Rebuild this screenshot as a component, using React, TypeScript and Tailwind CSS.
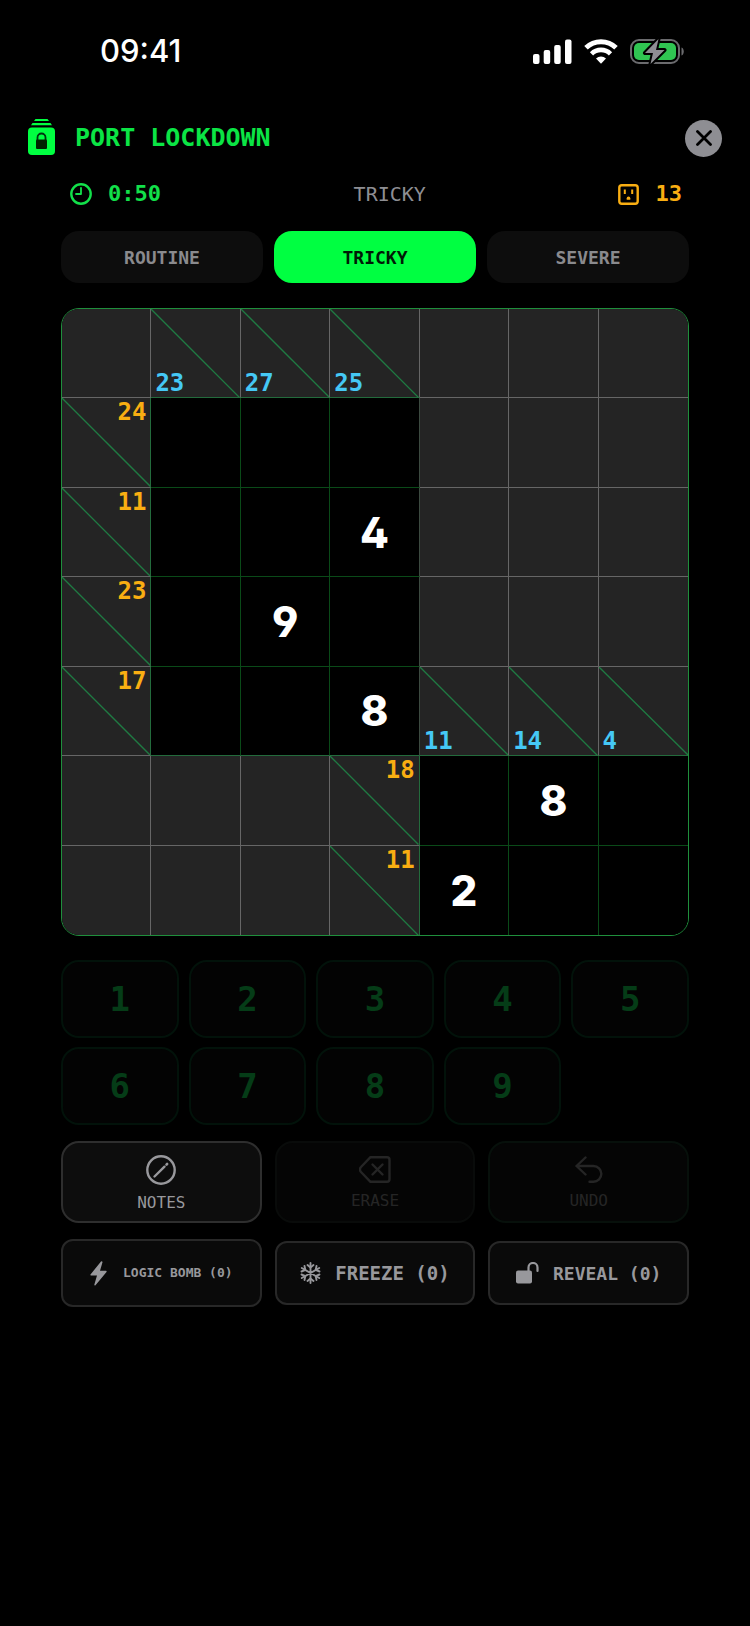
import React, { useState } from 'react';
import clsx from 'clsx';

type Cell =
  | { kind: 'block' }
  | { kind: 'clue'; down?: number; across?: number }
  | { kind: 'entry'; value?: number };

const B: Cell = { kind: 'block' };
const E: Cell = { kind: 'entry' };
const down = (n: number): Cell => ({ kind: 'clue', down: n });
const across = (n: number): Cell => ({ kind: 'clue', across: n });
const given = (n: number): Cell => ({ kind: 'entry', value: n });

const BOARD: Cell[][] = [
  [B, down(23), down(27), down(25), B, B, B],
  [across(24), E, E, E, B, B, B],
  [across(11), E, E, given(4), B, B, B],
  [across(23), E, given(9), E, B, B, B],
  [across(17), E, E, given(8), down(11), down(14), down(4)],
  [B, B, B, across(18), E, given(8), E],
  [B, B, B, across(11), given(2), E, E],
];

const LEVELS = ['ROUTINE', 'TRICKY', 'SEVERE'];

// Line colour depends on what sits on either side of it
const isEntry = (row: number, col: number) => BOARD[row]?.[col]?.kind === 'entry';

const rightBorder = (row: number, col: number) => {
  if (col === 6) return '';
  const a = isEntry(row, col);
  const b = isEntry(row, col + 1);
  if (a && b) return 'border-r border-r-[#0a4a18]';
  if (b) return 'border-r border-r-[#236b3c]';
  if (a) return 'border-r border-r-[#3c4a40]';
  return 'border-r border-r-[#666666]';
};

const bottomBorder = (row: number, col: number) => {
  if (row === 6) return '';
  const a = isEntry(row, col);
  const b = isEntry(row + 1, col);
  if (a && b) return 'border-b border-b-[#0a4a18]';
  if (a || b) return 'border-b border-b-[#236b3c]';
  return 'border-b border-b-[#666666]';
};

const StatusBar: React.FC = () => (
  <div className="flex items-center justify-between pl-[100px] pr-[66px] pt-[31px]">
    <span className="font-['Inter'] text-[31px] leading-10 font-medium text-white">09:41</span>
    <div className="flex items-center gap-3">
      <svg width="39" height="25" viewBox="0 0 39 25" fill="#fff">
        <rect x="0" y="15" width="6.500" height="10" rx="2" />
        <rect x="10.700" y="11" width="6.500" height="14" rx="2" />
        <rect x="21.200" y="6" width="6.500" height="19" rx="2" />
        <rect x="32" y="0.500" width="6.500" height="24.500" rx="2" />
      </svg>
      <svg width="34" height="25" viewBox="0 0 34 25" fill="none">
        <path d="M2 8.800a21.500 21.500 0 0 1 30 0" stroke="#fff" strokeWidth="5" />
        <path d="M7.500 14.800a13.500 13.500 0 0 1 19 0" stroke="#fff" strokeWidth="4.600" />
        <path d="M17 24.800l-5-5.300a7.400 7.400 0 0 1 10 0z" fill="#fff" />
      </svg>
      <svg width="54" height="27" viewBox="0 0 54 27">
        <rect x="1" y="2" width="48" height="23" rx="8" fill="none" stroke="#6b6b6e" strokeWidth="2" />
        <rect x="4" y="5" width="42" height="17" rx="5" fill="#30c552" />
        <path d="M51.500 9.500c3 .8 3 7.200 0 8z" fill="#6b6b6e" />
        <path d="M28.500 1L15 15h8l-2.500 11L34.500 12h-8.500z" fill="#8e8e93" stroke="#000" strokeWidth="4" strokeLinejoin="round" paintOrder="stroke" />
      </svg>
    </div>
  </div>
);

const Header: React.FC = () => (
  <header className="flex items-center justify-between px-7 pt-12">
    <div className="flex items-center gap-5">
      <svg width="27" height="38" viewBox="0 0 27 38">
        <path d="M7.500 0h12l1.500 2h-15zM4.500 4h18l1.500 2.300h-21z" fill="#00ff41" />
        <rect x="0" y="8.500" width="27" height="27.500" rx="4" fill="#00ff41" />
        <path d="M9.500 21v-2.500a4 4 0 0 1 8 0v2.500" fill="none" stroke="#031" strokeWidth="1.800" />
        <rect x="8" y="20.500" width="11" height="9.500" rx="1" fill="#020" />
      </svg>
      <h1 className="text-[25px] leading-9 font-bold text-[#0be545]">PORT LOCKDOWN</h1>
    </div>
    <button aria-label="Close" className="flex h-[37px] w-[37px] items-center justify-center rounded-full bg-[#8e8e93]">
      <svg width="16" height="16" viewBox="0 0 16 16" stroke="#000" strokeWidth="2.800" strokeLinecap="round">
        <path d="M1.500 1.500l13 13M14.500 1.500l-13 13" />
      </svg>
    </button>
  </header>
);

const Stats: React.FC = () => (
  <div className="flex items-center justify-between pl-[9px] pr-[7px] leading-7">
    <div className="flex items-center gap-4 text-[22px] font-bold text-[#12e04a]">
      <svg width="22" height="22" viewBox="0 0 22 22" fill="none" stroke="currentColor" strokeWidth="2.400">
        <circle cx="11" cy="11" r="9.700" />
        <path d="M11 4.800V11H6" strokeLinecap="round" strokeLinejoin="round" strokeWidth="1.800" />
      </svg>
      0:50
    </div>
    <div className="text-[20px] text-[#8e8e93]">TRICKY</div>
    <div className="flex items-center gap-4 text-[22px] font-bold text-[#f9ae12]">
      <svg width="21" height="21" viewBox="0 0 21 21" fill="currentColor">
        <rect x="1.300" y="1.300" width="18.400" height="18.400" rx="2.500" fill="none" stroke="currentColor" strokeWidth="2.400" />
        <rect x="5.800" y="5.500" width="2" height="4.500" />
        <rect x="13.200" y="5.500" width="2" height="4.500" />
        <path d="M8.700 15.800v-1.600a1.800 1.800 0 0 1 3.600 0v1.600z" />
      </svg>
      13
    </div>
  </div>
);

const BoardCell: React.FC<{ cell: Cell; row: number; col: number }> = ({ cell, row, col }) => {
  const borders = clsx(rightBorder(row, col), bottomBorder(row, col));

  if (cell.kind === 'entry') {
    return (
      <button
        aria-label={`Row ${row + 1}, column ${col + 1}`}
        className={clsx(
          "flex items-center justify-center bg-black font-['Inter'] text-[42px] font-extrabold text-white [font-feature-settings:'cv02','cv04']",
          borders
        )}
      >
        {cell.value}
      </button>
    );
  }

  if (cell.kind === 'block') {
    return <div className={clsx('bg-[#242424]', borders)} />;
  }

  return (
    <div className={clsx('relative flex bg-[#242424] px-1 text-[24px] leading-7 font-bold', borders)}>
      <svg className="absolute inset-0 h-full w-full" viewBox="0 0 100 100" preserveAspectRatio="none">
        <path d="M0 0L100 100" stroke="#1f7a42" strokeWidth="1.500" />
      </svg>
      {cell.across && <span className="ml-auto text-[#f9ae12]">{cell.across}</span>}
      {cell.down && <span className="mt-auto text-[#45c8f5]">{cell.down}</span>}
    </div>
  );
};

const App: React.FC = () => {
  const [level, setLevel] = useState('TRICKY');

  return (
    <div className="min-h-screen bg-black font-['DejaVu_Sans_Mono',monospace]">
      <StatusBar />
      <Header />

      <main className="px-[61px] pt-[23px]">
        <Stats />

        {/* Difficulty */}
        <div className="grid grid-cols-3 gap-[11px] pt-[23px]">
          {LEVELS.map((name) => (
            <button
              key={name}
              onClick={() => setLevel(name)}
              className={clsx(
                'h-[52px] rounded-[18px] text-[18px] font-bold',
                name === level ? 'bg-[#00ff41] text-[#001a06]' : 'bg-[#0d0d0d] text-[#8a8a8d]'
              )}
            >
              {name}
            </button>
          ))}
        </div>

        {/* Board */}
        <div className="mt-[25px] grid aspect-square grid-cols-7 grid-rows-7 overflow-hidden rounded-[18px] border border-[#1f8f3c]">
          {BOARD.map((cells, row) =>
            cells.map((cell, col) => <BoardCell key={`${row}-${col}`} cell={cell} row={row} col={col} />)
          )}
        </div>

        {/* Number pad */}
        <div className="mt-6 grid grid-cols-5 gap-x-[10px] gap-y-[9px]">
          {[1, 2, 3, 4, 5, 6, 7, 8, 9].map((n) => (
            <button
              key={n}
              disabled
              className="h-[78px] rounded-[18px] border-2 border-[#02120a] bg-[#030303] text-[34px] font-bold text-[#053c17]"
            >
              {n}
            </button>
          ))}
        </div>

        {/* Tools */}
        <div className="mt-4 grid grid-cols-3 gap-[13px] text-[16px] leading-5">
          <button className="flex h-[82px] flex-col items-center justify-center gap-2 rounded-[18px] border-2 border-[#2e2e2e] bg-[#0d0d0d] pt-[3px] text-[#98989c]">
            <svg width="30" height="30" viewBox="0 0 30 30" fill="none" stroke="currentColor" strokeLinecap="round">
              <circle cx="15" cy="15" r="13.700" strokeWidth="2.400" />
              <path d="M8.500 21.500L18.500 11.700" strokeWidth="2.400" />
              <path d="M20.500 9.600l.6-.6" strokeWidth="2.600" />
            </svg>
            NOTES
          </button>
          <button disabled className="flex h-[82px] flex-col items-center justify-center gap-2 rounded-[18px] border-2 border-[#090b0a] bg-[#050505] pt-[3px] text-[#252525]">
            <svg width="32" height="27" viewBox="0 0 32 27" fill="none" stroke="currentColor" strokeWidth="2.400" strokeLinecap="round" strokeLinejoin="round">
              <path d="M11.500 1.200H28a2.500 2.500 0 0 1 2.500 2.500v19.600a2.500 2.500 0 0 1-2.500 2.500H11.500L2 16a3.500 3.500 0 0 1 0-5z" />
              <path d="M13.500 8.500l10 10M23.500 8.500l-10 10" />
            </svg>
            ERASE
          </button>
          <button disabled className="flex h-[82px] flex-col items-center justify-center gap-2 rounded-[18px] border-2 border-[#07100b] bg-[#050505] pt-[3px] text-[#252525]">
            <svg width="28" height="27" viewBox="0 0 28 27" fill="none" stroke="currentColor" strokeWidth="2.400" strokeLinecap="round" strokeLinejoin="round">
              <path d="M10.500 1.500L1.500 10l9 8.500M1.500 10H18.500a7.800 7.800 0 0 1 0 15.700H14.500" />
            </svg>
            UNDO
          </button>
        </div>

        {/* Power-ups */}
        <div className="mt-4 grid grid-cols-3 items-center gap-[13px] font-bold text-[#98989c]">
          <button className="flex h-[68px] items-center justify-center gap-4 rounded-xl border-2 border-[#282828] bg-[#0a0a0a] text-[13px]">
            <svg width="17" height="25" viewBox="0 0 17 25" fill="currentColor">
              <path d="M11 .5L.5 13.500Q0 14.500 1 14.500H7L4.300 23.800Q4.500 25 5.500 24.200L16.500 11Q17 9.800 16 9.800H10L12.500 1.200Q12.300-.3 11 .5z" />
            </svg>
            LOGIC BOMB (0)
          </button>
          <button className="flex h-[64px] items-center justify-center gap-[14px] rounded-xl border-2 border-[#282828] bg-[#0a0a0a] text-[19px]">
            <svg width="21" height="22" viewBox="0 0 21 22" fill="none" stroke="currentColor" strokeWidth="1.900" strokeLinecap="round">
              <path d="M10.500 1v20M1.800 6l17.400 10M1.800 16L19.200 6" />
              <path d="M7.500 3l3 2.500 3-2.500M7.500 19l3-2.500 3 2.500M1.500 9.500l3.800-1.500-.8-4M19.500 12.500l-3.800 1.500.8 4M1.500 12.500l3.800 1.500-.8 4M19.500 9.500l-3.800-1.500.8-4" />
            </svg>
            FREEZE (0)
          </button>
          <button className="flex h-[64px] items-center justify-center gap-[14px] rounded-xl border-2 border-[#282828] bg-[#0a0a0a] text-[18px]">
            <svg width="23" height="22" viewBox="0 0 23 22">
              <rect x="0" y="8.500" width="16" height="13" rx="2" fill="currentColor" />
              <path d="M12.500 9.500V5.500a4.500 4.500 0 0 1 9 0v3.500" fill="none" stroke="currentColor" strokeWidth="2.200" strokeLinecap="round" />
            </svg>
            REVEAL (0)
          </button>
        </div>
      </main>
    </div>
  );
};

export default App;
